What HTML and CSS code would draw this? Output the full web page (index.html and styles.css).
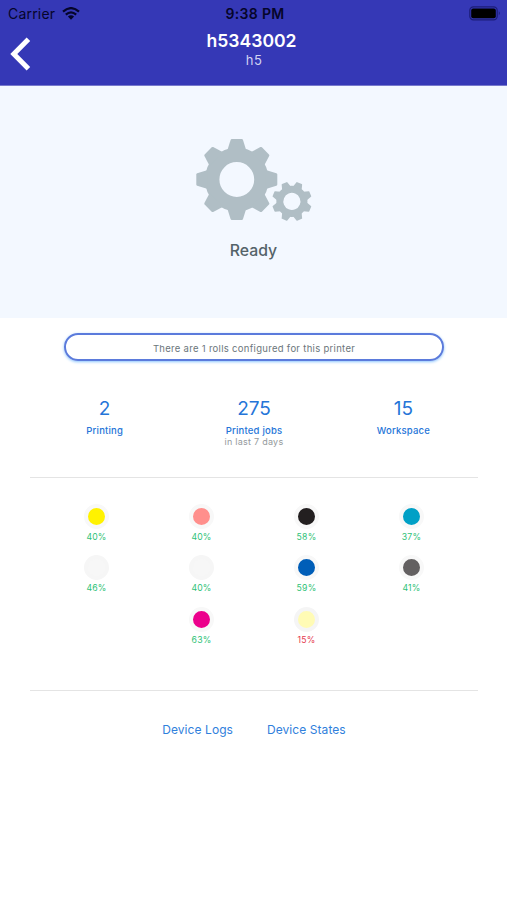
FILE: index.html
```html
<!DOCTYPE html>
<html lang="en">
<head>
    <meta charset="UTF-8">
    <meta name="viewport" content="width=device-width, initial-scale=1.0">
    <title>h5343002</title>
    <link rel="stylesheet" href="styles.css">
</head>
<body>
    <header class="header">
        <div class="status-bar">
            <div class="carrier">
                <span>Carrier</span>
                <svg class="wifi" viewBox="0 0 18 13" width="18" height="13">
                    <path d="M1 4.6Q9-2.4 17 4.6M3.8 7.6Q9 3 14.2 7.6" fill="none" stroke="#05052a" stroke-width="2.2"/>
                    <path d="M5.9 9.6Q9 7 12.1 9.6L9 12.8Z" fill="#05052a"/>
                </svg>
            </div>
            <div class="time">9:38 PM</div>
            <svg class="battery" viewBox="0 0 33 15" width="33" height="15">
                <rect x="0.8" y="0.8" width="27.4" height="13" rx="3.6" fill="none" stroke="#1c1d78" stroke-width="1.2"/>
                <rect x="2.2" y="2.6" width="24.6" height="9.6" rx="2" fill="#000"/>
                <path d="M29.8 5.3q2 2 0 4z" fill="#1c1d78"/>
            </svg>
        </div>
        <div class="nav">
            <svg class="back" viewBox="0 0 22 34" width="22" height="34">
                <path d="M18.4 2.2L3.8 17L18.4 31.8" fill="none" stroke="#fff" stroke-width="5"/>
            </svg>
            <div class="titles">
                <h1>h5343002</h1>
                <p>h5</p>
            </div>
        </div>
    </header>

    <section class="hero">
        <svg class="gears" viewBox="0 0 118 84" width="118" height="84">
            <defs>
                <path id="tooth" d="M-9.5-29L-6.2-39.6Q-5.9-40.5-5-40.5H5Q5.9-40.5 6.2-39.6L9.5-29Z"/>
                <g id="gear">
                    <circle r="24.6" fill="none" stroke="#b0bec5" stroke-width="14.4"/>
                    <use href="#tooth"/>
                    <use href="#tooth" transform="rotate(45)"/>
                    <use href="#tooth" transform="rotate(90)"/>
                    <use href="#tooth" transform="rotate(135)"/>
                    <use href="#tooth" transform="rotate(180)"/>
                    <use href="#tooth" transform="rotate(225)"/>
                    <use href="#tooth" transform="rotate(270)"/>
                    <use href="#tooth" transform="rotate(315)"/>
                </g>
            </defs>
            <g fill="#b0bec5">
                <use href="#gear" transform="translate(41.8 41.5)"/>
                <use href="#gear" transform="translate(96.9 63.4) rotate(22.5) scale(0.49)"/>
            </g>
        </svg>
        <p class="state">Ready</p>
    </section>

    <main class="content">
        <div class="notice">There are 1 rolls configured for this printer</div>

        <div class="stats">
            <div class="stat">
                <strong>2</strong>
                <span>Printing</span>
            </div>
            <div class="stat">
                <strong>275</strong>
                <span>Printed jobs</span>
                <small>in last 7 days</small>
            </div>
            <div class="stat">
                <strong>15</strong>
                <span>Workspace</span>
            </div>
        </div>

        <div class="inks">
            <div class="ink"><i class="dot yellow"></i>40%</div>
            <div class="ink"><i class="dot salmon"></i>40%</div>
            <div class="ink"><i class="dot black"></i>58%</div>
            <div class="ink"><i class="dot cyan"></i>37%</div>
            <div class="ink"><i class="dot clear"></i>46%</div>
            <div class="ink"><i class="dot clear"></i>40%</div>
            <div class="ink"><i class="dot blue"></i>59%</div>
            <div class="ink"><i class="dot gray"></i>41%</div>
            <div class="ink"><i class="dot magenta"></i>63%</div>
            <div class="ink low"><i class="dot cream"></i>15%</div>
        </div>

        <div class="links">
            <a>Device Logs</a>
            <a>Device States</a>
        </div>
    </main>
</body>
</html>
```
FILE: styles.css
```css
* {
    margin: 0;
    padding: 0;
    box-sizing: border-box;
}

body {
    min-height: 100vh;
    background: #fff;
    font-family: Inter, Roboto, sans-serif;
}

.header {
    height: 86px;
    background: #3538b6;
    border-bottom: 1px solid #7779cc;
}

.status-bar {
    display: grid;
    grid-template-columns: 1fr auto 1fr;
    align-items: center;
    height: 27px;
    padding: 0 5px 0 8px;
    color: #05052a;
    font-size: 14px;
}

.carrier {
    display: flex;
    align-items: center;
    gap: 7px;
    letter-spacing: 0.2px;
}

.time {
    font-weight: 600;
    letter-spacing: 0.3px;
}

.battery {
    justify-self: end;
}

.nav {
    display: grid;
    grid-template-columns: 40px 1fr 40px;
    padding: 3px 9px 0 10px;
}

.back {
    margin-top: 7px;
}

.titles {
    text-align: center;
    color: #fff;
}

.titles h1 {
    margin-right: 5px;
    font-size: 17.6px;
    line-height: 22px;
    font-weight: 600;
}

.titles p {
    font-size: 13px;
    line-height: 17px;
    letter-spacing: 0.5px;
    color: #d2d3f2;
}

.hero {
    display: flex;
    flex-direction: column;
    align-items: center;
    height: 232px;
    padding-top: 52px;
    background: #f3f8ff;
}

.state {
    margin-top: 19px;
    font-size: 15.8px;
    line-height: 20px;
    font-weight: 500;
    color: #546369;
}

.content {
    padding: 15px 29px 0 30px;
}

.notice {
    height: 28px;
    margin: 0 34px;
    padding-top: 1px;
    border: 2px solid #5b7bdc;
    border-radius: 14px;
    box-shadow: 0 1px 3px #8ac5ff;
    text-align: center;
    font-size: 9.5px;
    line-height: 26px;
    letter-spacing: 0.3px;
    color: #6b767b;
}

.stats {
    display: grid;
    grid-template-columns: repeat(3, 1fr);
    height: 117px;
    padding-top: 36px;
    border-bottom: 1px solid #e4e4e4;
}

.stat {
    display: flex;
    flex-direction: column;
    align-items: center;
    color: #2575d8;
}

.stat strong {
    font-size: 19px;
    line-height: 24px;
    font-weight: 400;
}

.stat span {
    margin-top: 4px;
    font-size: 9.5px;
    line-height: 12px;
    font-weight: 500;
    letter-spacing: 0.2px;
}

.stat small {
    font-size: 9px;
    line-height: 10px;
    letter-spacing: 0.25px;
    color: #959a9d;
}

.inks {
    display: flex;
    flex-wrap: wrap;
    justify-content: center;
    align-content: flex-start;
    height: 213px;
    padding: 26px 14px 0;
    border-bottom: 1px solid #e4e4e4;
}

.ink {
    display: flex;
    flex-direction: column;
    align-items: center;
    width: 25%;
    height: 51.3px;
    font-size: 8.7px;
    line-height: 12px;
    letter-spacing: 0.2px;
    color: #2fc278;
}

.ink.low {
    color: #e5394f;
}

.dot {
    width: 25px;
    height: 25px;
    margin-bottom: 2px;
    border: 4px solid #f8f8f8;
    border-radius: 50%;
}

.yellow { background: #fff200; }
.salmon { background: #ff8f8c; }
.black { background: #231f20; }
.cyan { background: #00a0c6; }
.clear { background: #f7f7f7; border-color: #f6f6f6; }
.blue { background: #005eb8; }
.gray { background: #636061; }
.magenta { background: #ec008c; }
.cream { background: #fffbb5; border-color: #f5f5f5; }

.links {
    display: flex;
    justify-content: center;
    gap: 34px;
    padding-top: 31px;
    font-size: 12px;
    line-height: 16px;
    letter-spacing: 0.07px;
    color: #3080dc;
}
```
